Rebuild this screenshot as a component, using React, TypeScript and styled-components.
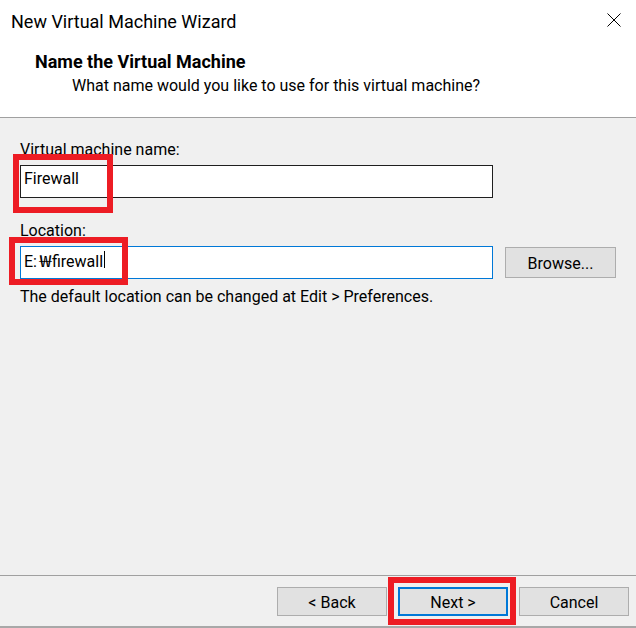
import React from "react";
import styled, { createGlobalStyle } from "styled-components";

const GlobalStyle = createGlobalStyle`
  html, body {
    margin: 0;
    padding: 0;
    background: #f0f0f0;
  }
  body {
    font-family: Roboto, "Noto Sans CJK KR", sans-serif;
    color: #000;
  }
  * { box-sizing: border-box; }
`;

const Window = styled.div`
  width: 636px;
  height: 628px;
  display: flex;
  flex-direction: column;
  background: #f0f0f0;
  overflow: hidden;
`;

const Header = styled.header`
  height: 118px;
  flex: none;
  background: #fff;
  border-bottom: 1px solid #a0a0a0;
  display: flex;
  flex-direction: column;
`;

const TitleBar = styled.div`
  height: 40px;
  display: flex;
  justify-content: space-between;
  align-items: flex-start;
  padding: 10px 15px 0 11px;
`;

const Title = styled.div`
  font-size: 18px;
  line-height: 24px;
`;

const CloseButton = styled.button`
  width: 14px;
  height: 14px;
  margin-top: 3px;
  padding: 0;
  border: 0;
  background: transparent;
  display: flex;
  svg { display: block; }
`;

const HeadingBlock = styled.div`
  padding: 10px 0 0 35px;
  display: flex;
  flex-direction: column;
`;

const Heading = styled.h1`
  margin: 0;
  font-size: 18px;
  line-height: 24px;
  font-weight: 700;
`;

const Subtitle = styled.p`
  margin: 2px 0 0 37px;
  font-size: 16px;
  line-height: 20px;
`;

const Content = styled.main`
  flex: 1;
  padding: 22px 20px 0 20px;
  display: flex;
  flex-direction: column;
`;

const Label = styled.label<{ $gap?: number }>`
  display: block;
  font-size: 16px;
  line-height: 20px;
  margin-top: ${(p) => p.$gap ?? 0}px;
  margin-bottom: 5px;
`;

const FieldRow = styled.div`
  display: grid;
  grid-template-columns: 473px 111px;
  column-gap: 12px;
  align-items: center;
`;

const FieldWrap = styled.div`
  position: relative;
  width: 473px;
`;

const TextField = styled.div<{ $focused?: boolean }>`
  height: 33px;
  width: 473px;
  padding: 3px 3px 0 3px;
  background: #fff;
  border: 1px solid ${(p) => (p.$focused ? "#0078d7" : "#1f1f1f")};
  font-size: 16px;
  line-height: 20px;
  white-space: nowrap;
`;

const Won = styled.span`
  display: inline-block;
  width: 13px;
  margin: 0 0 0 2px;
  text-align: center;
  font-family: "Noto Sans CJK KR", sans-serif;
  transform: scaleX(1.35);
`;

const Caret = styled.span`
  display: inline-block;
  width: 1px;
  height: 17px;
  margin-left: 1px;
  background: #000;
  vertical-align: -1px;
`;

const Note = styled.p`
  margin: 8px 0 0 0;
  font-size: 16px;
  line-height: 20px;
`;

const Footer = styled.footer`
  flex: none;
  height: 53px;
  border-top: 1px solid #a0a0a0;
  border-bottom: 2px solid #a8a8a8;
  padding: 11px 7px 0 0;
  display: flex;
  justify-content: flex-end;
  align-items: flex-start;
  gap: 11px;
`;

const Button = styled.button<{ $default?: boolean; $w?: number; $h?: number }>`
  width: ${(p) => p.$w ?? 110}px;
  height: ${(p) => p.$h ?? 29}px;
  padding: 2px 0 0 0;
  margin: 0;
  background: #e1e1e1;
  border: ${(p) => (p.$default ? "2px solid #0078d7" : "1px solid #adadad")};
  font-family: Roboto, sans-serif;
  font-size: 16px;
  line-height: 20px;
  color: #000;
  display: flex;
  align-items: center;
  justify-content: center;
`;

const ButtonWrap = styled.div`
  position: relative;
  display: flex;
`;

const Highlight = styled.div<{ $top: number; $left: number; $w: number; $h: number }>`
  position: absolute;
  top: ${(p) => p.$top}px;
  left: ${(p) => p.$left}px;
  width: ${(p) => p.$w}px;
  height: ${(p) => p.$h}px;
  border: 6px solid #ed1c24;
  pointer-events: none;
`;

function CloseIcon() {
  return (
    <svg width="14" height="14" viewBox="0 0 14 14" fill="none">
      <path d="M0.5 0.5 L13.5 13.5 M13.5 0.5 L0.5 13.5" stroke="#000" strokeWidth="1" />
    </svg>
  );
}

export default function App() {
  return (
    <>
      <GlobalStyle />
      <Window>
        <Header>
          <TitleBar>
            <Title>New Virtual Machine Wizard</Title>
            <CloseButton aria-label="Close">
              <CloseIcon />
            </CloseButton>
          </TitleBar>
          <HeadingBlock>
            <Heading>Name the Virtual Machine</Heading>
            <Subtitle>What name would you like to use for this virtual machine?</Subtitle>
          </HeadingBlock>
        </Header>
        <Content>
          <Label>Virtual machine name:</Label>
          <FieldWrap>
            <TextField>Firewall</TextField>
            <Highlight $top={-11} $left={-7} $w={100} $h={59} />
          </FieldWrap>
          <Label $gap={23}>Location:</Label>
          <FieldRow>
            <FieldWrap>
              <TextField $focused>
                E:<Won>₩</Won>firewall
                <Caret />
              </TextField>
              <Highlight $top={-9} $left={-11} $w={119} $h={48} />
            </FieldWrap>
            <Button $w={111} $h={31}>Browse...</Button>
          </FieldRow>
          <Note>The default location can be changed at Edit &gt; Preferences.</Note>
        </Content>
        <Footer>
          <Button>&lt; Back</Button>
          <ButtonWrap>
            <Button $default>Next &gt;</Button>
            <Highlight $top={-10} $left={-10} $w={128} $h={48} />
          </ButtonWrap>
          <Button>Cancel</Button>
        </Footer>
      </Window>
    </>
  );
}
